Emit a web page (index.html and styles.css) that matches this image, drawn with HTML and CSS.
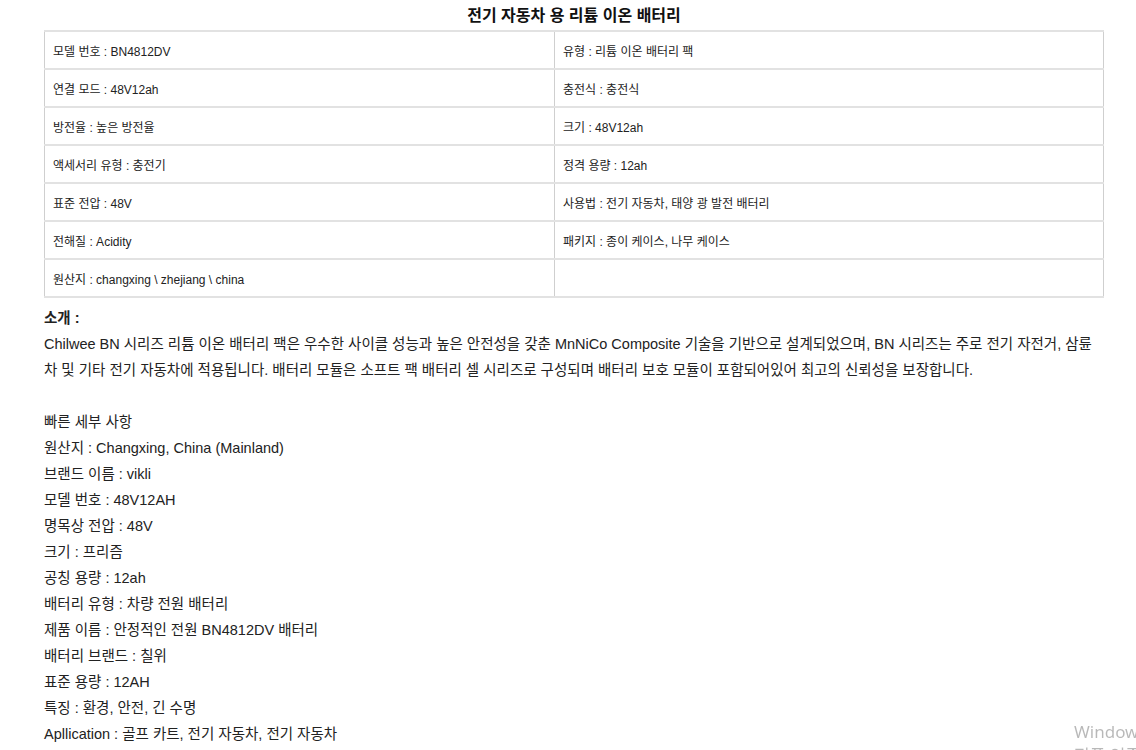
FILE: index.html
```html
<!DOCTYPE html>
<html lang="ko">
<head>
<meta charset="utf-8">
<title>전기 자동차 용 리튬 이온 배터리</title>
<link rel="stylesheet" href="styles.css">
</head>
<body>
<div class="page">
  <h1 class="title">전기 자동차 용 리튬 이온 배터리</h1>
  <table class="specs">
    <tr><td>모델 번호 : BN4812DV</td><td>유형 : 리튬 이온 배터리 팩</td></tr>
    <tr><td>연결 모드 : 48V12ah</td><td>충전식 : 충전식</td></tr>
    <tr><td>방전율 : 높은 방전율</td><td>크기 : 48V12ah</td></tr>
    <tr><td>액세서리 유형 : 충전기</td><td>정격 용량 : 12ah</td></tr>
    <tr><td>표준 전압 : 48V</td><td>사용법 : 전기 자동차, 태양 광 발전 배터리</td></tr>
    <tr><td>전해질 : Acidity</td><td>패키지 : 종이 케이스, 나무 케이스</td></tr>
    <tr><td>원산지 : changxing \ zhejiang \ china</td><td></td></tr>
  </table>
  <div class="intro">
    <p class="label">소개 :</p>
    <p>Chilwee BN 시리즈 리튬 이온 배터리 팩은 우수한 사이클 성능과 높은 안전성을 갖춘 MnNiCo Composite 기술을 기반으로 설계되었으며, BN 시리즈는 주로 전기 자전거, 삼륜차 및 기타 전기 자동차에 적용됩니다. 배터리 모듈은 소프트 팩 배터리 셀 시리즈로 구성되며 배터리 보호 모듈이 포함되어있어 최고의 신뢰성을 보장합니다.</p>
    <p class="blank">&nbsp;</p>
    <p>빠른 세부 사항</p>
    <p>원산지 : Changxing, China (Mainland)</p>
    <p>브랜드 이름 : vikli</p>
    <p>모델 번호 : 48V12AH</p>
    <p>명목상 전압 : 48V</p>
    <p>크기 : 프리즘</p>
    <p>공칭 용량 : 12ah</p>
    <p>배터리 유형 : 차량 전원 배터리</p>
    <p>제품 이름 : 안정적인 전원 BN4812DV 배터리</p>
    <p>배터리 브랜드 : 칠위</p>
    <p>표준 용량 : 12AH</p>
    <p>특징 : 환경, 안전, 긴 수명</p>
    <p>Apllication : 골프 카트, 전기 자동차, 전기 자동차</p>
  </div>
</div>
<div class="watermark">Windows<br>정품 인증</div>
</body>
</html>
```
FILE: styles.css
```css
html, body {
  margin: 0;
  padding: 0;
  background: #fff;
}
body {
  font-family: "Liberation Sans", Arial, "Noto Sans CJK KR", sans-serif;
  color: #222;
  overflow: hidden;
  height: 750px;
}
.page {
  width: 1060px;
  margin-left: 44px;
  padding-top: 5px;
}
.title {
  margin: 0 0 3px 0;
  font-size: 16px;
  line-height: 22px;
  font-weight: bold;
  text-align: center;
  color: #111;
}
.specs {
  width: 100%;
  border-collapse: collapse;
  table-layout: fixed;
  font-size: 12px;
  color: #222;
}
.specs td {
  height: 36px;
  padding: 0 0 0 8px;
  border-top: 2px solid #e2e2e2;
  border-bottom: 2px solid #e2e2e2;
  border-left: 1px solid #cfcfcf;
  border-right: 1px solid #cfcfcf;
  vertical-align: middle;
  white-space: nowrap;
}
.specs td:first-child {
  width: 501px;
}
.intro {
  padding-top: 7px;
  font-size: 14.5px;
  line-height: 26px;
  color: #222;
}
.intro p {
  margin: 0;
}
.intro .label {
  font-weight: bold;
}
.watermark {
  position: fixed;
  left: 1074px;
  top: 720px;
  font-family: "Noto Sans", "Noto Sans CJK KR", sans-serif;
  font-size: 17px;
  line-height: 24px;
  color: rgba(0, 0, 0, 0.28);
  white-space: nowrap;
}
```
